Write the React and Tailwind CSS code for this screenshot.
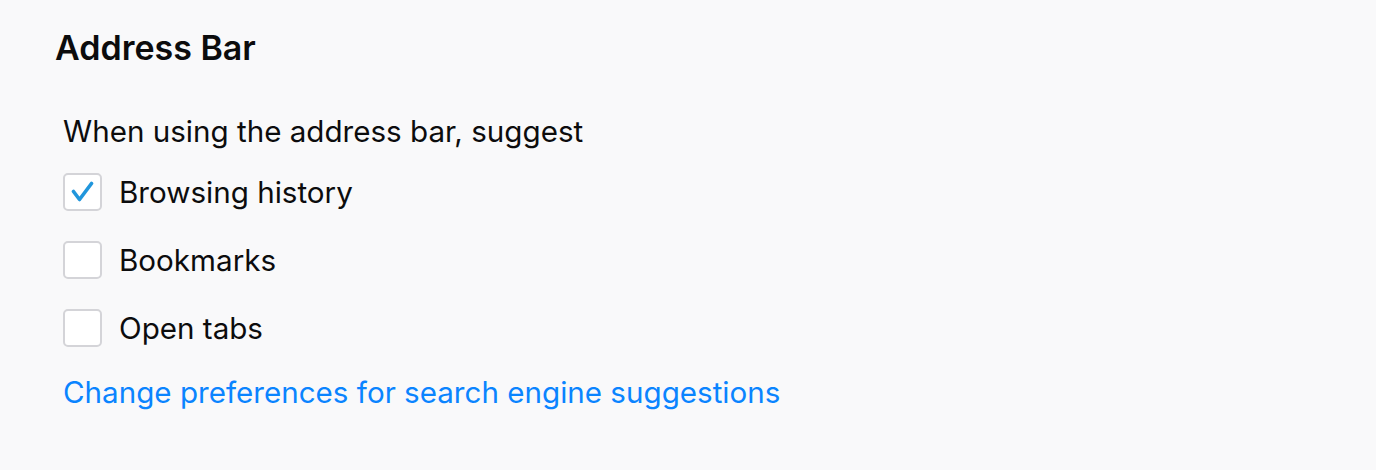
import React from 'react';

const Option = ({ label, checked }) => (
  <label className="flex items-center gap-[17px] h-[38px]">
    <span className="w-[39px] h-[38px] shrink-0 bg-white border-2 border-[#d4d4d8] rounded-[5px] flex items-center justify-center">
      {checked && (
        <svg width="24" height="24" viewBox="0 0 24 24" fill="none">
          <path d="M2.5 11.5 L8.5 19.5 L20.5 3.5" stroke="#2196dc" strokeWidth="3.6" strokeLinecap="round" strokeLinejoin="round" />
        </svg>
      )}
    </span>
    <span className="text-[29.6px] text-[#0c0c0d]">{label}</span>
  </label>
);

export default function App() {
  return (
    <div className="min-h-[470px] bg-[#f9f9fa] pl-[55px] pt-[28px] font-['Inter','Noto_Sans',sans-serif]">
      <h1 className="text-[34px] font-semibold text-[#0c0c0d] leading-[40px]">Address Bar</h1>
      <div className="pl-[8px] mt-[45px]">
        <p className="text-[29.6px] text-[#0c0c0d] leading-[36px]">When using the address bar, suggest</p>
        <div className="mt-[24px] flex flex-col gap-[30px]">
          <Option label="Browsing history" checked />
          <Option label="Bookmarks" />
          <Option label="Open tabs" />
        </div>
        <a className="block mt-[27px] text-[29.6px] leading-[36px] text-[#0a84ff]">Change preferences for search engine suggestions</a>
      </div>
    </div>
  );
}
